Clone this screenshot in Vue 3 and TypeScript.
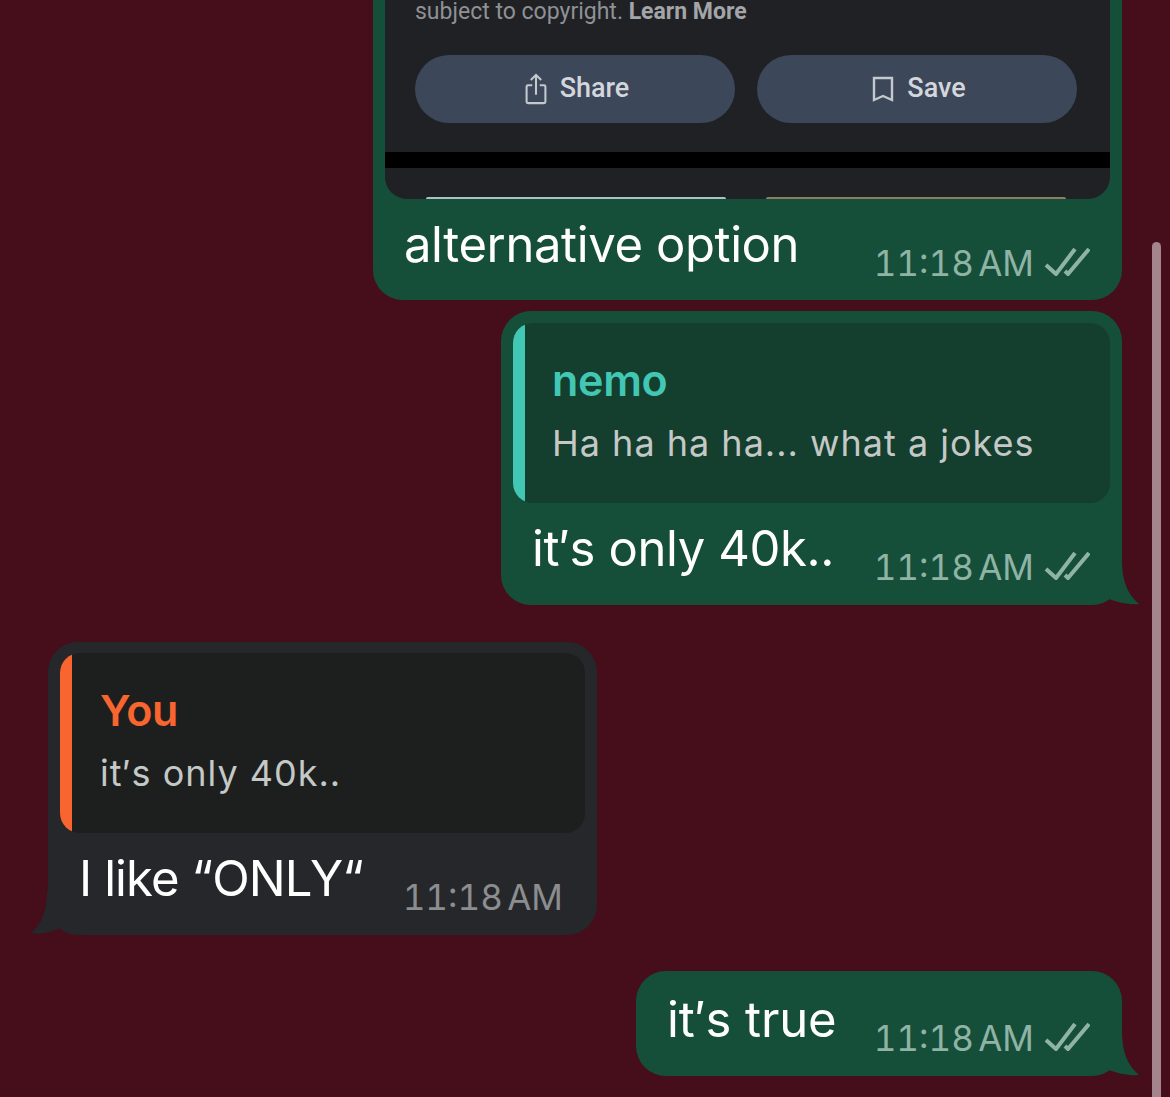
<template>
  <div class="page">
    <div class="scrollbar"></div>

    <div class="bubble out first">
      <div class="shot">
        <p class="caption">subject to copyright. <b>Learn More</b></p>
        <div class="actions">
          <div class="action">
            <svg class="action-icon" width="24" height="32" viewBox="0 0 24 34" fill="none">
              <path d="M8 13H3.500a1.500 1.500 0 0 0-1.500 1.500V30.500A1.500 1.500 0 0 0 3.500 32h17a1.500 1.500 0 0 0 1.500-1.500V14.500A1.500 1.500 0 0 0 20.500 13H16M12 23V2M6.500 7.500 12 2l5.500 5.500" stroke="#c4c8cf" stroke-width="2.200" />
            </svg>
            <span>Share</span>
          </div>
          <div class="action">
            <svg class="action-icon" width="24" height="28" viewBox="0 0 24 28" fill="none">
              <path d="M3 3h18v22l-9-4-9 4z" stroke="#c4c8cf" stroke-width="2.400" />
            </svg>
            <span>Save</span>
          </div>
        </div>
        <div class="band"></div>
        <div class="thumbs">
          <i class="thumb blue"></i>
          <i class="thumb tan"></i>
        </div>
      </div>
      <div class="line">
        <span class="text">alternative option</span>
        <span class="meta">
          <span class="time">11:18 AM</span>
          <svg class="ticks" width="46" height="30" viewBox="0 0 46 30" fill="none">
            <path d="M2 19l10 9L31 3M21 25l3 3L45 3" stroke="#8fb3a5" stroke-width="4" />
          </svg>
        </span>
      </div>
    </div>

    <div class="bubble out second">
      <div class="reply teal">
        <div class="reply-name">nemo</div>
        <div class="reply-text">Ha ha ha ha... what a jokes</div>
      </div>
      <div class="line">
        <span class="text">it′s only 40k..</span>
        <span class="meta">
          <span class="time">11:18 AM</span>
          <svg class="ticks" width="46" height="30" viewBox="0 0 46 30" fill="none">
            <path d="M2 19l10 9L31 3M21 25l3 3L45 3" stroke="#8fb3a5" stroke-width="4" />
          </svg>
        </span>
      </div>
      <svg class="tail right" width="55" height="45" viewBox="0 0 55 45">
        <path d="M37 0C37 20 42 34 54 44C46 45 33 43 22 38C17 42 10 45 2 45L0 45Z" fill="#164f39" />
      </svg>
    </div>

    <div class="bubble in third">
      <div class="reply orange">
        <div class="reply-name">You</div>
        <div class="reply-text">it′s only 40k..</div>
      </div>
      <div class="line">
        <span class="text tight">I like “ONLY“</span>
        <span class="meta">
          <span class="time">11:18 AM</span>
        </span>
      </div>
      <svg class="tail left" width="55" height="45" viewBox="0 0 55 45">
        <path d="M17 0C17 20 12 34 1 43C9 45 20 43 30 38C35 42 44 45 52 45L55 45Z" fill="#25272a" />
      </svg>
    </div>

    <div class="bubble out fourth">
      <div class="line">
        <span class="text loose">it′s true</span>
        <span class="meta">
          <span class="time">11:18 AM</span>
          <svg class="ticks" width="46" height="30" viewBox="0 0 46 30" fill="none">
            <path d="M2 19l10 9L31 3M21 25l3 3L45 3" stroke="#8fb3a5" stroke-width="4" />
          </svg>
        </span>
      </div>
      <svg class="tail right" width="55" height="45" viewBox="0 0 55 45">
        <path d="M37 0C37 20 42 34 54 44C46 45 33 43 22 38C17 42 10 45 2 45L0 45Z" fill="#164f39" />
      </svg>
    </div>
  </div>
</template>

<script setup lang="ts">
</script>

<style>
html,
body {
  background: #460d1a;
}
</style>

<style scoped>
.page {
  position: relative;
  height: 1097px;
  overflow: hidden;
  background: #460d1a;
  display: flex;
  flex-direction: column;
  padding: 0 48px;
  box-sizing: border-box;
  font-family: Inter, "Noto Sans", sans-serif;
}

.scrollbar {
  position: absolute;
  left: 1152px;
  top: 242px;
  width: 9px;
  height: 870px;
  border-radius: 5px;
  background: #a5858d;
}

.bubble {
  position: relative;
  box-sizing: border-box;
  border-radius: 30px;
}

.out {
  align-self: flex-end;
  background: #164f39;
}

.in {
  align-self: flex-start;
  background: #25272a;
}

.first {
  width: 749px;
  height: 300px;
  padding: 0 12px;
  border-radius: 0 0 30px 30px;
}

.second {
  width: 621px;
  height: 294px;
  margin-top: 11px;
  padding: 12px;
}

.third {
  width: 549px;
  height: 293px;
  margin-top: 37px;
  padding: 11px 12px 0;
}

.fourth {
  width: 486px;
  height: 105px;
  margin-top: 36px;
  padding: 3px 12px 0;
}

.shot {
  height: 199px;
  overflow: hidden;
  display: flex;
  flex-direction: column;
  background: #202125;
  border-radius: 0 0 22px 22px;
  font-family: Roboto, sans-serif;
}

.caption {
  margin: 1px 0 0 30px;
  font-size: 23px;
  line-height: 22px;
  color: #8f9194;
  white-space: nowrap;
}

.caption b {
  font-weight: 700;
  color: #a3a5a8;
}

.actions {
  display: flex;
  gap: 22px;
  margin: 32px 33px 0 30px;
}

.action {
  flex: 1;
  height: 68px;
  padding-left: 3px;
  border-radius: 34px;
  background: #3c475a;
  display: flex;
  align-items: center;
  justify-content: center;
  gap: 12px;
  color: #d3d6db;
  font-size: 27px;
  font-weight: 500;
}

.action span {
  margin-top: -2px;
}

.band {
  height: 16px;
  margin-top: 29px;
  background: #000;
}

.thumbs {
  display: flex;
  gap: 40px;
  margin: 29px 44px 0 41px;
}

.thumb {
  flex: 1;
  height: 2px;
  border-radius: 12px 12px 0 0;
}

.blue {
  background: #a9c4c6;
}

.tan {
  background: #8f7d60;
}

.reply {
  position: relative;
  box-sizing: border-box;
  height: 180px;
  padding: 29px 0 0 40px;
  border-radius: 20px;
  overflow: hidden;
}

.reply::before {
  content: "";
  position: absolute;
  left: 0;
  top: 0;
  bottom: 0;
  width: 12px;
}

.teal {
  padding-left: 39px;
  background: #143e2e;
}

.teal::before {
  background: #41c7b3;
}

.teal .reply-name {
  color: #41c7b3;
}

.orange {
  background: #1d1f1f;
}

.orange::before {
  background: #f8652f;
}

.orange .reply-name {
  color: #f8652f;
}

.reply-name {
  font-size: 43px;
  line-height: 56px;
  font-weight: 600;
  letter-spacing: -0.3px;
}

.reply-text {
  margin-top: 13px;
  font-size: 36px;
  line-height: 44px;
  letter-spacing: 1px;
  color: #c4c8c6;
}

.line {
  display: flex;
  align-items: flex-start;
  justify-content: space-between;
  padding: 17px 20px 0 19px;
}

.in .line {
  padding-right: 22px;
}

.text {
  font-size: 49px;
  line-height: 58px;
  letter-spacing: -0.4px;
  color: #fff;
  white-space: nowrap;
}

.text.tight {
  letter-spacing: -0.9px;
}

.text.loose {
  letter-spacing: -0.1px;
}

.meta {
  display: flex;
  align-items: center;
  gap: 10px;
  margin-top: 27px;
  height: 40px;
}

.time {
  font-size: 35px;
  line-height: 40px;
  font-variant-numeric: tabular-nums;
  word-spacing: -5px;
  color: #8fb3a5;
  white-space: nowrap;
}

.in .time {
  color: #8b8d8f;
}

.ticks {
  flex: none;
  margin-top: -4px;
}

.tail {
  position: absolute;
  bottom: 0;
}

.tail.right {
  right: -18px;
}

.tail.left {
  left: -18px;
}
</style>
